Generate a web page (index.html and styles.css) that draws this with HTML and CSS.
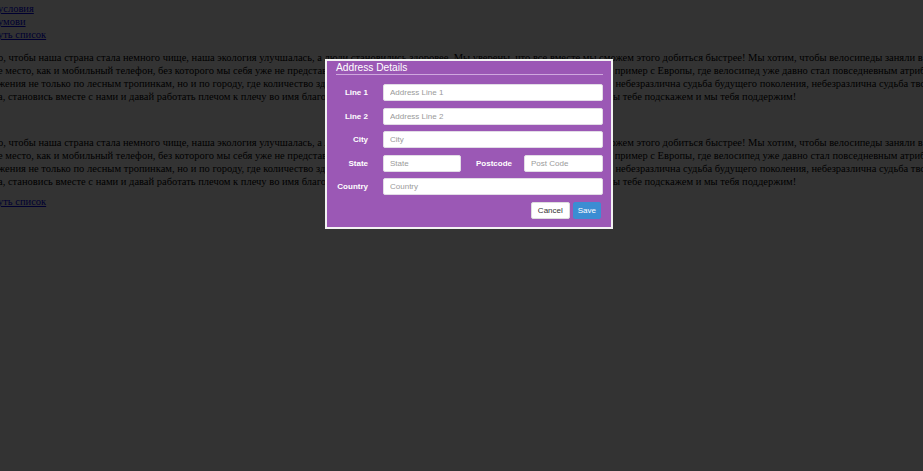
FILE: index.html
```html
<!DOCTYPE html>
<html lang="ru">
<head>
<meta charset="utf-8">
<title>Address Details</title>
<link rel="stylesheet" href="styles.css">
</head>
<body>
<div class="page">
  <div class="links">
    <a href="#" class="link">условия</a><br>
    <a href="#" class="link">умови</a><br>
    <a href="#" class="link">уть список</a>
  </div>
  <p class="text">о, чтобы наша страна стала немного чище, наша экология улучшалась, а люди становились здоровее. Мы уверены, что все вместе мы сможем этого добиться быстрее! Мы хотим, чтобы велосипеды заняли в нашей жизни<br>е место, как и мобильный телефон, без которого мы себя уже не представляем. Велосипед - это удобно, полезно и экологично. Мы берем пример с Европы, где велосипед уже давно стал повседневным атрибутом<br>жения не только по лесным тропинкам, но и по городу, где количество здоровых людей растет с каждым днем. Ведь если тебе, как и нам, небезразлична судьба будущего поколения, небезразлична судьба твоих<br>а, становись вместе с нами и давай работать плечом к плечу во имя благосостояния страны! Пиши нам смело свои идеи и пожелания, а мы тебе подскажем и мы тебя поддержим!</p>
  <p class="text second">о, чтобы наша страна стала немного чище, наша экология улучшалась, а люди становились здоровее. Мы уверены, что все вместе мы сможем этого добиться быстрее! Мы хотим, чтобы велосипеды заняли в нашей жизни<br>е место, как и мобильный телефон, без которого мы себя уже не представляем. Велосипед - это удобно, полезно и экологично. Мы берем пример с Европы, где велосипед уже давно стал повседневным атрибутом<br>жения не только по лесным тропинкам, но и по городу, где количество здоровых людей растет с каждым днем. Ведь если тебе, как и нам, небезразлична судьба будущего поколения, небезразлична судьба твоих<br>а, становись вместе с нами и давай работать плечом к плечу во имя благосостояния страны! Пиши нам смело свои идеи и пожелания, а мы тебе подскажем и мы тебя поддержим!</p>
  <a href="#" class="link last">уть список</a>
</div>

<div class="overlay"></div>

<div class="modal">
  <div class="modal-title">Address Details</div>
  <form class="form">
    <div class="row">
      <label class="label">Line 1</label>
      <input class="input" type="text" placeholder="Address Line 1">
    </div>
    <div class="row">
      <label class="label">Line 2</label>
      <input class="input" type="text" placeholder="Address Line 2">
    </div>
    <div class="row">
      <label class="label">City</label>
      <input class="input" type="text" placeholder="City">
    </div>
    <div class="row">
      <label class="label">State</label>
      <input class="input state" type="text" placeholder="State">
      <label class="label postcode-label">Postcode</label>
      <input class="input" type="text" placeholder="Post Code">
    </div>
    <div class="row">
      <label class="label">Country</label>
      <input class="input" type="text" placeholder="Country">
    </div>
    <div class="actions">
      <button type="button" class="btn btn-cancel">Cancel</button>
      <button type="button" class="btn btn-save">Save</button>
    </div>
  </form>
</div>
</body>
</html>
```
FILE: styles.css
```css
html, body {
  margin: 0;
  padding: 0;
  background: #ffffff;
  overflow: hidden;
}

.page {
  font-family: "Liberation Serif", "Times New Roman", serif;
  font-size: 10.5px;
  line-height: 13px;
  color: #000;
  padding-top: 2px;
  margin-left: -2px;
  white-space: nowrap;
}

.link {
  color: #0000ee;
  text-decoration: underline;
}

.text {
  margin: 10px 0 0 0;
}

.text.second {
  margin-top: 33px;
}

.last {
  display: inline-block;
  margin-top: 7px;
}

.overlay {
  position: fixed;
  inset: 0;
  background: rgba(0, 0, 0, 0.8);
}

.modal {
  position: absolute;
  left: 325px;
  top: 59px;
  width: 267px;
  box-sizing: content-box;
  border: 2px solid #f2f2f2;
  background: #9b58b5;
  padding: 1px 8px 8px 9px;
  font-family: "Liberation Sans", Arial, sans-serif;
  color: #fff;
}

.modal-title {
  font-size: 10.2px;
  line-height: 12px;
  border-bottom: 1px solid #cfa8de;
}

.form {
  display: flex;
  flex-direction: column;
  gap: 6.5px;
  margin: 9px 0 0 0;
}

.row {
  display: flex;
  align-items: center;
  height: 17px;
}

.label {
  width: 32px;
  flex: none;
  text-align: right;
  font-size: 8px;
  font-weight: bold;
  margin-right: 15px;
  white-space: nowrap;
}

.postcode-label {
  width: auto;
  margin: 0 12px 0 15px;
}

.input {
  flex: 1;
  min-width: 0;
  height: 17px;
  box-sizing: border-box;
  border: 1px solid #e2dce6;
  border-radius: 2px;
  background: #fff;
  padding: 0 6px;
  font-family: "Liberation Sans", Arial, sans-serif;
  font-size: 8px;
  color: #555;
  outline: none;
}

.input::placeholder {
  color: #9a9a9a;
}

.input.state {
  flex: none;
  width: 78px;
}

.actions {
  display: flex;
  justify-content: flex-end;
  gap: 3px;
  margin-top: 0.5px;
  padding-right: 2px;
}

.btn {
  height: 17px;
  box-sizing: border-box;
  border-radius: 2px;
  font-family: "Liberation Sans", Arial, sans-serif;
  font-size: 8px;
  line-height: 15px;
  cursor: pointer;
}

.btn-cancel {
  background: #fff;
  color: #333;
  border: 1px solid #ddd;
  padding: 0 6px;
}

.btn-save {
  background: #3b8dd3;
  color: #fff;
  border: 1px solid #3b8dd3;
  padding: 0 4px;
}
```
